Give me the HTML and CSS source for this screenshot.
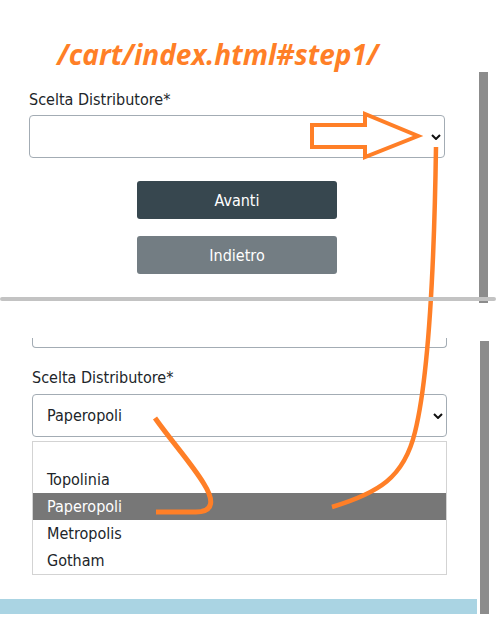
FILE: index.html
```html
<!DOCTYPE html>
<html lang="it">
    <head>
        <meta charset="utf-8">
        <meta name="viewport" content="width=device-width, initial-scale=1.0">
        <title>Scelta Distributore</title>
        <link rel="stylesheet" href="styles.css">
    </head>
    <body>
        <div class="panel top">
            <div class="col">
                <h1 class="note">/cart/index.html#step1/</h1>
                <form class="fields">
                    <label class="label" for="dist1">Scelta Distributore*</label>
                    <div class="select" id="dist1">
                        <span></span>
                        <svg width="10" height="6" viewBox="0 0 10 6"><path d="M1 1 L5 5 L9 1" /></svg>
                    </div>
                    <div class="buttons">
                        <button type="button" class="btn next">Avanti</button>
                        <button type="button" class="btn back">Indietro</button>
                    </div>
                </form>
            </div>
            <div class="scroll top-scroll"></div>
        </div>

        <div class="divider"></div>

        <div class="panel bottom">
            <div class="col">
                <div class="fields">
                    <div class="input-tail"></div>
                    <label class="label" for="dist2">Scelta Distributore*</label>
                    <div class="select" id="dist2">
                        <span>Paperopoli</span>
                        <svg width="10" height="6" viewBox="0 0 10 6"><path d="M1 1 L5 5 L9 1" /></svg>
                    </div>
                    <ul class="options">
                        <li></li>
                        <li>Topolinia</li>
                        <li class="active">Paperopoli</li>
                        <li>Metropolis</li>
                        <li>Gotham</li>
                    </ul>
                </div>
                <div class="footer-bar"></div>
            </div>
            <div class="scroll bottom-scroll"></div>
        </div>

        <!-- orange pen marks drawn over both panels -->
        <svg class="marks" width="496" height="623" viewBox="0 0 496 623">
            <polygon points="312,125 365,125 365,114 418,136 365,157 365,147 312,147" stroke-width="4" />
            <path d="M436,147 C434,280 428,380 415,432 C404,478 378,493 332,507" stroke-width="4.5" />
            <path d="M155,418 C172,442 192,464 204,484 C214,500 214,512 196,512 L156,512" stroke-width="5" />
        </svg>
    </body>
</html>
```

FILE: styles.css
```css
* {
    box-sizing: border-box;
}

body {
    margin: 0;
    width: 496px;
    height: 623px;
    position: relative;
    overflow: hidden;
    background: #fff;
    color: #212529;
    font-family: "DejaVu Sans Condensed", "DejaVu Sans", sans-serif;
    font-size: 16px;
}

.panel {
    display: flex;
}

.top {
    height: 297px;
}

.top .col {
    width: 479px;
}

.bottom {
    height: 322px;
}

.bottom .col {
    width: 480px;
}

.note {
    margin: 37px 0 0;
    padding-left: 57px;
    height: 34px;
    color: #ff7f27;
    font-family: "Open Sans", sans-serif;
    font-style: italic;
    font-weight: 700;
    font-size: 28px;
    line-height: 34px;
}

.top .fields {
    padding-left: 29px;
    width: 445px;
}

.bottom .fields {
    padding-left: 32px;
    width: 447px;
}

.label {
    display: block;
    line-height: 20px;
    margin-top: 20px;
}

.top .label {
    margin-top: 19px;
}

.select {
    display: flex;
    align-items: center;
    justify-content: space-between;
    height: 43px;
    margin-top: 5px;
    padding: 0 3px 0 14px;
    border: 1px solid #a3acb4;
    border-radius: 4px;
}

.bottom .select {
    margin-top: 6px;
}

.select svg path {
    fill: none;
    stroke: #111;
    stroke-width: 2;
}

.buttons {
    display: flex;
    flex-direction: column;
    gap: 17px;
    margin: 23px 0 0 108px;
}

.btn {
    width: 200px;
    height: 38px;
    border: 0;
    border-radius: 3px;
    color: #fff;
    font: inherit;
}

.next {
    background: #37474f;
}

.back {
    background: #737d83;
}

.scroll {
    width: 9px;
    background: #8c8c8c;
}

.top-scroll {
    margin-top: 72px;
    height: 231px;
}

.bottom-scroll {
    margin-top: 40px;
    height: 273px;
}

.divider {
    position: relative;
    z-index: 1;
    height: 4px;
    border-radius: 2px;
    background: #c3c3c3;
}

.input-tail {
    margin-top: 37px;
    height: 10px;
    border: 1px solid #a3acb4;
    border-top: 0;
    border-radius: 0 0 4px 4px;
}

.options {
    list-style: none;
    margin: 4px 0 0;
    padding: 0;
    border: 1px solid #d3d3d3;
}

.options li {
    height: 27px;
    line-height: 27px;
    padding-left: 14px;
}

.options li:first-child {
    height: 24px;
}

.options .active {
    background: #777;
    color: #fff;
}

.footer-bar {
    margin-top: 24px;
    width: 477px;
    height: 15px;
    background: #aad4e3;
}

.marks {
    position: absolute;
    top: 0;
    left: 0;
    pointer-events: none;
}

.marks polygon,
.marks path {
    fill: none;
    stroke: #ff7f27;
}
```
